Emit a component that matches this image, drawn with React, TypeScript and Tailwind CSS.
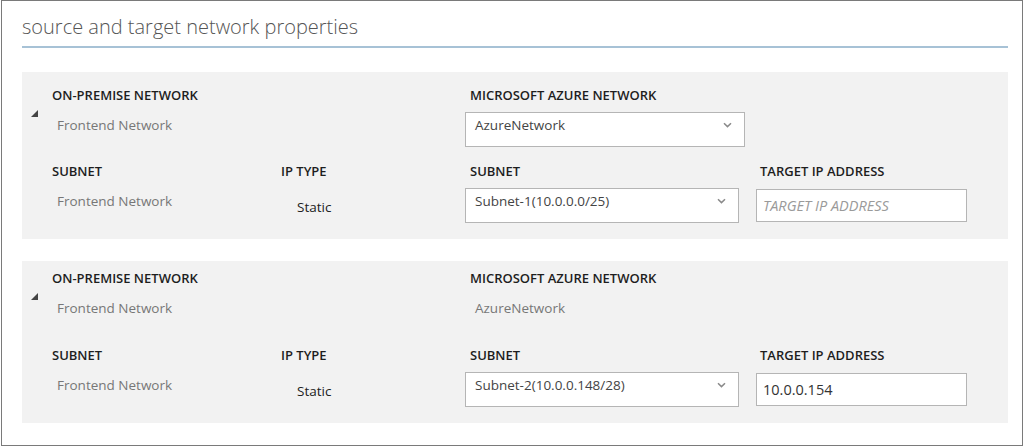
import React from "react";

const font = { fontFamily: '"Open Sans", "Noto Sans", sans-serif' };

function Chevron() {
  return (
    <svg width="9" height="6" viewBox="0 0 9 6" className="shrink-0">
      <polyline points="1,1.2 4.5,4.6 8,1.2" fill="none" stroke="#8a8a8a" strokeWidth="1.5" />
    </svg>
  );
}

function Triangle() {
  return (
    <svg width="7" height="7" viewBox="0 0 7 7">
      <polygon points="7,0 7,7 0,7" fill="#444" />
    </svg>
  );
}

function Label({ children }: { children: React.ReactNode }) {
  return (
    <div className="h-4 leading-4 text-[13px] font-semibold text-[#1e1e1e] whitespace-nowrap">
      {children}
    </div>
  );
}

function Value({ children, pl = "pl-[5px]" }: { children: React.ReactNode; pl?: string }) {
  return (
    <div className={`mt-[12px] h-5 leading-5 text-[13.5px] text-[#777] whitespace-nowrap ${pl}`}>
      {children}
    </div>
  );
}

function Select({ text, w }: { text: string; w: string }) {
  return (
    <div
      className={`mt-[9px] h-[35px] ${w} border border-[#b5b5b5] bg-white flex items-start justify-between pl-[9px] pr-[12px] pt-[2px]`}
    >
      <span className="h-5 leading-5 text-[13.5px] text-[#444] whitespace-nowrap">{text}</span>
      <span className="h-5 flex items-center">
        <Chevron />
      </span>
    </div>
  );
}

function Panel({
  pt,
  azureSelect,
  subnet,
  target,
}: {
  pt: string;
  azureSelect: boolean;
  subnet: string;
  target?: string;
}) {
  return (
    <div className={`bg-[#f2f2f2] flex ${pt} pb-[16px]`}>
      <div className="w-[30px] pl-[9px] pt-[23px] shrink-0">
        <Triangle />
      </div>
      <div className="flex flex-col">
        {/* Row 1 */}
        <div className={`flex ${azureSelect ? "h-[76px]" : "h-[77px]"}`}>
          <div className="w-[413px]">
            <Label>ON-PREMISE NETWORK</Label>
            <Value>Frontend Network</Value>
          </div>
          <div className="w-[291px]">
            <div className="pl-[5px]">
              <Label>MICROSOFT AZURE NETWORK</Label>
            </div>
            {azureSelect ? (
              <Select text="AzureNetwork" w="w-[280px]" />
            ) : (
              <Value pl="pl-[10px]">AzureNetwork</Value>
            )}
          </div>
        </div>
        {/* Row 2 */}
        <div className="flex">
          <div className="w-[229px]">
            <Label>SUBNET</Label>
            <Value>Frontend Network</Value>
          </div>
          <div className="w-[184px]">
            <Label>IP TYPE</Label>
            <div className="mt-[18px] h-5 leading-5 text-[13.5px] text-[#222] pl-[16px]">Static</div>
          </div>
          <div className="w-[291px]">
            <div className="pl-[5px]">
              <Label>SUBNET</Label>
            </div>
            <Select text={subnet} w="w-[274px]" />
          </div>
          <div>
            <div className="pl-[4px]">
              <Label>TARGET IP ADDRESS</Label>
            </div>
            <div className="mt-[10px] h-[33px] w-[211px] border border-[#b5b5b5] bg-white flex items-center pl-[6px]">
              {target ? (
                <span className="text-[14.5px] text-[#333] leading-5">{target}</span>
              ) : (
                <span className="text-[14.5px] italic text-[#9a9a9a] leading-5">TARGET IP ADDRESS</span>
              )}
            </div>
          </div>
        </div>
      </div>
    </div>
  );
}

export default function App() {
  return (
    <div className="w-[1024px] h-[447px] bg-white" style={font}>
      <div className="ml-[1px] w-[1022px] h-[446px] border border-[#7a7a7a] pl-[20px] pr-[14px]">
        <div className="pt-[13px] pb-[6px] border-b-2 border-[#a7c2d6] text-[20px] leading-[26px] font-light text-[#555]">
          source and target network properties
        </div>
        <div className="mt-[24px]">
          <Panel pt="pt-[15px]" azureSelect={true} subnet="Subnet-1(10.0.0.0/25)" />
        </div>
        <div className="mt-[22px]">
          <Panel pt="pt-[9px]" azureSelect={false} subnet="Subnet-2(10.0.0.148/28)" target="10.0.0.154" />
        </div>
      </div>
    </div>
  );
}
